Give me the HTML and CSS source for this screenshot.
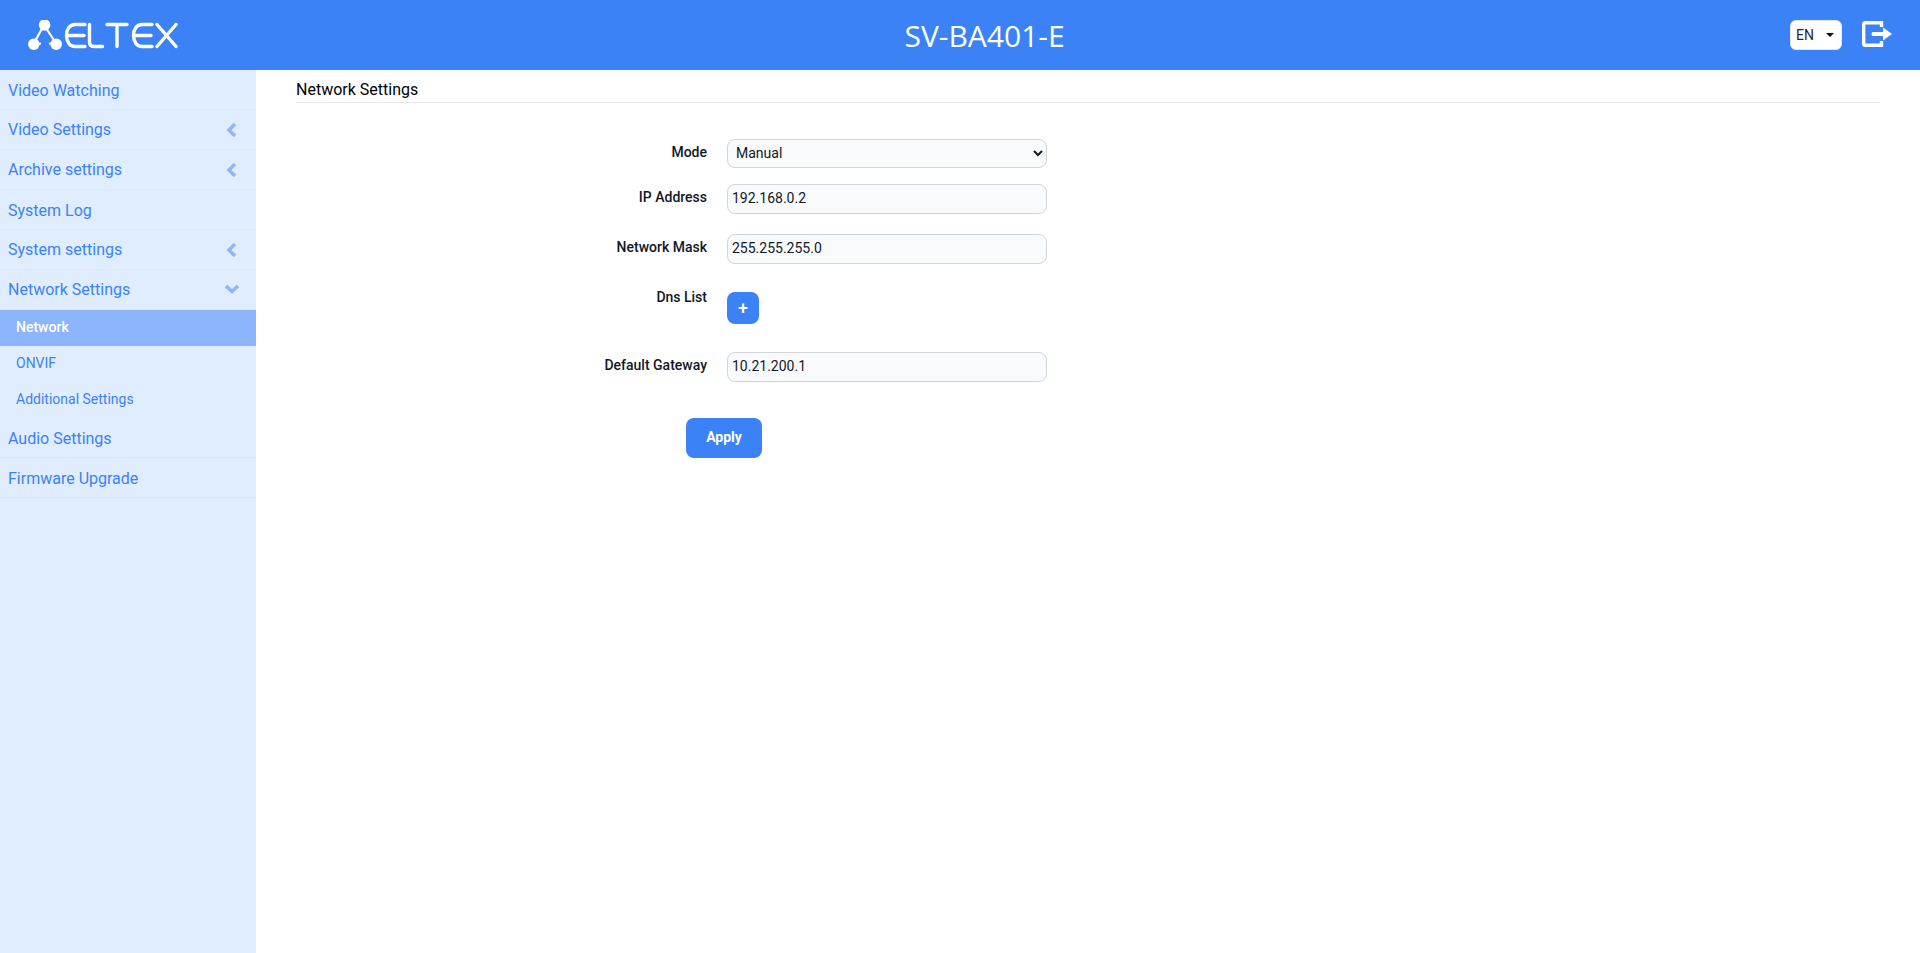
FILE: index.html
```html
<!DOCTYPE html>
<html lang="en">
<head>
<meta charset="utf-8">
<title>SV-BA401-E</title>
<link rel="stylesheet" href="styles.css">
</head>
<body>
<header class="topbar">
  <div class="logo">
    <svg width="150" height="30" viewBox="28 20 150 30" aria-label="ELTEX">
      <g fill="none" stroke="#fff" stroke-width="2.2">
        <path d="M44 25 L33.5 44 M44 25 L56.5 44 M33.5 44 L41 43.5 M56.5 44 L49 43.5"/>
      </g>
      <g fill="#fff">
        <circle cx="44.6" cy="25" r="5.8"/>
        <circle cx="33.8" cy="44.2" r="5.8"/>
        <circle cx="56.2" cy="44.2" r="5.8"/>
      </g>
      <g fill="none" stroke="#fff" stroke-width="3.4" stroke-linecap="round" stroke-linejoin="round">
        <path d="M85 24.5 H75 C69.5 24.5 66.5 29.5 66.5 35.5 C66.5 42 70 46.5 75 46.5 H85 M67.5 35.5 H84"/>
        <path d="M89.5 24.5 V42 C89.5 45 91 46.5 94 46.5 H102.5"/>
        <path d="M107 24.5 H127 M117 24.5 V46.5"/>
        <path d="M152 24.5 H142 C136.5 24.5 133.5 29.5 133.5 35.5 C133.5 42 137 46.5 142 46.5 H152 M134.5 35.5 H151"/>
        <path d="M157 24.5 L176 46.5 M176 24.5 L157 46.5"/>
      </g>
    </svg>
  </div>
  <h1 class="device-name">SV-BA401-E</h1>
  <div class="topbar-actions">
    <button class="lang" type="button"><span>EN</span><i class="caret"></i></button>
    <svg class="logout" width="30" height="30" viewBox="0 0 30 30" aria-label="Log out">
      <path d="M19.5 7 V2.7 H3.5 Q1.7 2.7 1.7 4.5 V23.5 Q1.7 25.3 3.5 25.3 H19.5 V21" fill="none" stroke="#fff" stroke-width="3.4"/>
      <path d="M11 12 H21 V7.5 L30 14 L21 20.5 V16 H11 Q9.5 16 9.5 14 Q9.5 12 11 12 Z" fill="#fff"/>
    </svg>
  </div>
</header>
<div class="layout">
  <nav class="sidebar">
    <a class="nav-item nav-plain">Video Watching</a>
    <a class="nav-item">Video Settings<svg class="chev" width="12" height="16" viewBox="0 0 12 16"><path d="M9 2 L3 8 L9 14" /></svg></a>
    <a class="nav-item">Archive settings<svg class="chev" width="12" height="16" viewBox="0 0 12 16"><path d="M9 2 L3 8 L9 14" /></svg></a>
    <a class="nav-item nav-plain">System Log</a>
    <a class="nav-item">System settings<svg class="chev" width="12" height="16" viewBox="0 0 12 16"><path d="M9 2 L3 8 L9 14" /></svg></a>
    <a class="nav-item">Network Settings<svg class="chev chev-open" width="16" height="12" viewBox="0 0 16 12"><path d="M2 2 L8 7.5 L14 2" /></svg></a>
    <a class="sub-item active">Network</a>
    <a class="sub-item">ONVIF</a>
    <a class="sub-item">Additional Settings</a>
    <a class="nav-item nav-plain">Audio Settings</a>
    <a class="nav-item nav-plain">Firmware Upgrade</a>
  </nav>
  <main class="content">
    <h2 class="page-title">Network Settings</h2>
    <form class="settings-form">
      <label class="field-label">Mode</label>
      <select class="control select-control"><option>Manual</option></select>
      <label class="field-label">IP Address</label>
      <input class="control input-control gap-20" type="text" value="192.168.0.2">
      <label class="field-label">Network Mask</label>
      <input class="control input-control gap-28" type="text" value="255.255.255.0">
      <label class="field-label field-label-high">Dns List</label>
      <div class="gap-28"><button class="add-btn" type="button">+</button></div>
      <label class="field-label">Default Gateway</label>
      <input class="control input-control gap-36" type="text" value="10.21.200.1">
      <div class="actions"><button class="apply-btn" type="button">Apply</button></div>
    </form>
  </main>
</div>
</body>
</html>
```

FILE: styles.css
```css
* { box-sizing: border-box; }
html, body { height: 100%; }
body {
  margin: 0;
  display: flex;
  flex-direction: column;
  overflow: hidden;
  background: #fff;
  color: #111827;
  font-family: Roboto, "Liberation Sans", sans-serif;
}
.topbar {
  height: 70px;
  flex: none;
  display: flex;
  align-items: center;
  justify-content: space-between;
  padding: 0 28px;
  background: #3b82f6;
  color: #fff;
}
.logo { width: 150px; height: 30px; }
.logo svg { display: block; }
.device-name {
  margin: 0;
  padding-top: 2px;
  font-family: "Open Sans", sans-serif;
  font-size: 30px;
  font-weight: 400;
  line-height: 36px;
  width: 159px;
  white-space: nowrap;
  text-align: center;
}
.topbar-actions { display: flex; align-items: center; gap: 20px; }
.lang {
  width: 52px;
  height: 30px;
  padding: 0 7px 0 5px;
  display: flex;
  align-items: center;
  justify-content: space-between;
  border: 1px solid #e5e7eb;
  border-radius: 6px;
  background: #fff;
  color: #1f2937;
  font-family: Roboto, sans-serif;
  font-size: 14px;
}
.caret {
  width: 0;
  height: 0;
  border-left: 4px solid transparent;
  border-right: 4px solid transparent;
  border-top: 4px solid #111;
}
.logout { display: block; }
.layout { flex: 1; display: flex; min-height: 0; }
.sidebar { width: 256px; flex: none; background: #e0edff; }
.nav-item {
  height: 40px;
  padding: 0 8px;
  display: flex;
  align-items: center;
  justify-content: space-between;
  border-bottom: 1px solid #e5e7eb;
  color: #3b82f6;
  font-size: 16px;
}
.nav-plain { padding-top: 2px; }
.chev { margin-right: 10px; }
.chev-open { margin-right: 8px; }
.chev path { fill: none; stroke: #8fb6fb; stroke-width: 3.5; }
.sub-item {
  height: 36px;
  padding: 0 0 2px 16px;
  display: flex;
  align-items: center;
  color: #3b82f6;
  font-size: 14px;
}
.sub-item.active { background: #8db5fb; color: #fff; font-weight: 500; }
.content { flex: 1; padding: 8px 40px 0; }
.page-title {
  margin: 0;
  height: 25px;
  border-bottom: 1px solid #e5e7eb;
  color: #000;
  font-size: 16px;
  font-weight: 400;
  line-height: 24px;
}
.settings-form {
  margin-top: 36px;
  display: grid;
  grid-template-columns: 411px 320px;
  column-gap: 20px;
  align-items: start;
}
.field-label {
  padding-top: 3px;
  text-align: right;
  font-size: 14px;
  font-weight: 500;
  line-height: 20px;
}
.field-label-high { padding-top: 0; margin-top: -5px; }
.control {
  width: 100%;
  border: 1px solid #d1d5db;
  border-radius: 8px;
  background: #f9fafb;
  color: #111827;
  font-family: Roboto, sans-serif;
  font-size: 14px;
}
.select-control { height: 29px; padding: 0 4px 1px 4px; margin-bottom: 16px; }
.input-control { height: 30px; padding: 0 4px 2px; outline: none; }
.gap-20 { margin-bottom: 20px; }
.gap-28 { margin-bottom: 28px; }
.gap-36 { margin-bottom: 36px; }
.add-btn {
  display: block;
  width: 32px;
  height: 32px;
  padding: 0 0 2px;
  border: 0;
  border-radius: 8px;
  background: #3b82f6;
  color: #fff;
  font-family: Roboto, sans-serif;
  font-size: 18px;
  font-weight: 500;
}
.actions { grid-column: 1 / -1; padding-left: 390px; }
.apply-btn {
  width: 76px;
  height: 40px;
  padding: 0 0 2px;
  border: 0;
  border-radius: 8px;
  background: #3b82f6;
  color: #fff;
  font-family: Roboto, sans-serif;
  font-size: 14px;
  font-weight: 700;
}
```
